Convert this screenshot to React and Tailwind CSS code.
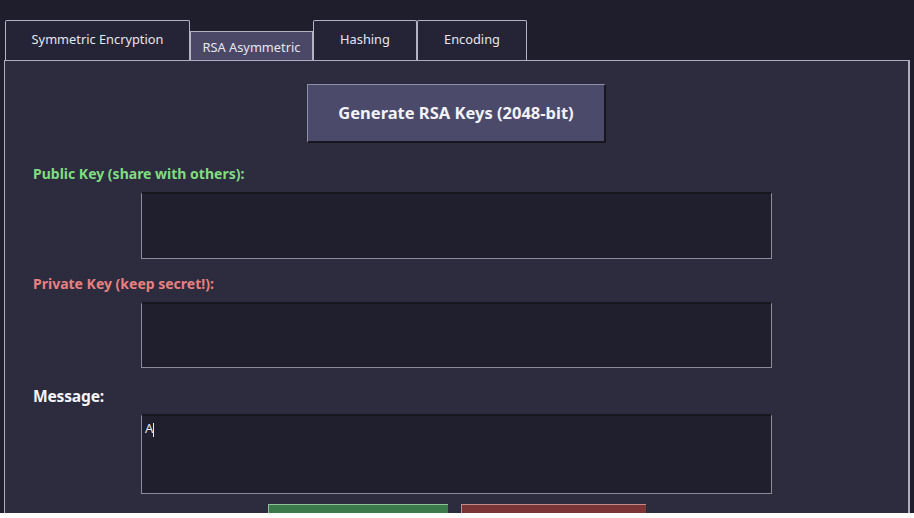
export default function App() {
  const tabs = [
    { label: 'Symmetric Encryption', w: 'w-[185px]' },
    { label: 'RSA Asymmetric', w: 'w-[123px]', active: true },
    { label: 'Hashing', w: 'w-[104px]' },
    { label: 'Encoding', w: 'w-[110px]' },
  ];

  return (
    <div
      className="w-[914px] h-[513px] overflow-hidden bg-[#1f1e2c] flex flex-col"
      style={{ fontFamily: '"Noto Sans", "Open Sans", sans-serif' }}
    >
      <div className="h-[2px] bg-[#121219]" />
      <div className="flex items-end pl-[5px] pt-[20px]">
        {tabs.map((t) =>
          t.active ? (
            <div
              key={t.label}
              className={`${t.w} h-[29px] flex items-center justify-center bg-[#4a4866] border border-b-0 border-[#b4b3c4] text-[12.8px] text-[#e6e6f0] pt-[3px]`}
            >
              {t.label}
            </div>
          ) : (
            <div
              key={t.label}
              className={`${t.w} h-[40px] flex items-center justify-center bg-[#252436] border border-b-0 border-[#b4b3c4] rounded-t-[2px] text-[12.8px] text-[#e6e6f0] pb-[2px]`}
            >
              {t.label}
            </div>
          )
        )}
      </div>
      <div className="ml-[4px] w-[906px] flex-1 bg-[#2d2c3e] border-t border-l border-r-2 border-[#aeadbd] flex flex-col pl-[28px]">
        <div className="flex justify-center pr-[28px] pt-[23px]">
          <button className="w-[299px] h-[59px] bg-[#4b4a6b] border-t border-l border-[#8e8daa] border-b-2 border-r-2 border-b-[#17161f] border-r-[#17161f] text-[16.5px] font-bold text-[#f2f2f8]">
            Generate RSA Keys (2048-bit)
          </button>
        </div>
        <div className="mt-[22px] text-[14px] font-bold text-[#80dc80] leading-[18px]">
          Public Key (share with others):
        </div>
        <div className="flex justify-center pr-[28px] mt-[9px]">
          <div className="w-[631px] h-[67px] bg-[#201f2e] border border-t-2 border-[#8c8b9c] border-t-[#17161f]" />
        </div>
        <div className="mt-[16px] text-[14px] font-bold text-[#e88080] leading-[18px]">
          Private Key (keep secret!):
        </div>
        <div className="flex justify-center pr-[28px] mt-[9px]">
          <div className="w-[631px] h-[66px] bg-[#201f2e] border border-t-2 border-[#8c8b9c] border-t-[#17161f]" />
        </div>
        <div className="mt-[18px] text-[15.6px] font-bold text-[#f4f4f8] leading-[20px] tracking-[-0.2px]">
          Message:
        </div>
        <div className="flex justify-center pr-[28px] mt-[8px]">
          <div className="w-[631px] h-[80px] bg-[#201f2e] border border-t-2 border-[#8c8b9c] border-t-[#17161f] px-[3px] pt-[3px] text-[13px] text-[#e8e8f0] leading-[18px]">
            A<span className="inline-block w-px h-[14px] bg-[#e8e8f0] align-middle" />
          </div>
        </div>
        <div className="flex justify-center gap-[13px] pr-[28px] mt-[10px]">
          <div className="w-[180px] h-[20px] bg-[#3b7a4b] border-t border-l border-[#8fc09c]" />
          <div className="w-[185px] h-[20px] bg-[#7a3636] border-t border-l border-[#c48a8a]" />
        </div>
      </div>
    </div>
  );
}
